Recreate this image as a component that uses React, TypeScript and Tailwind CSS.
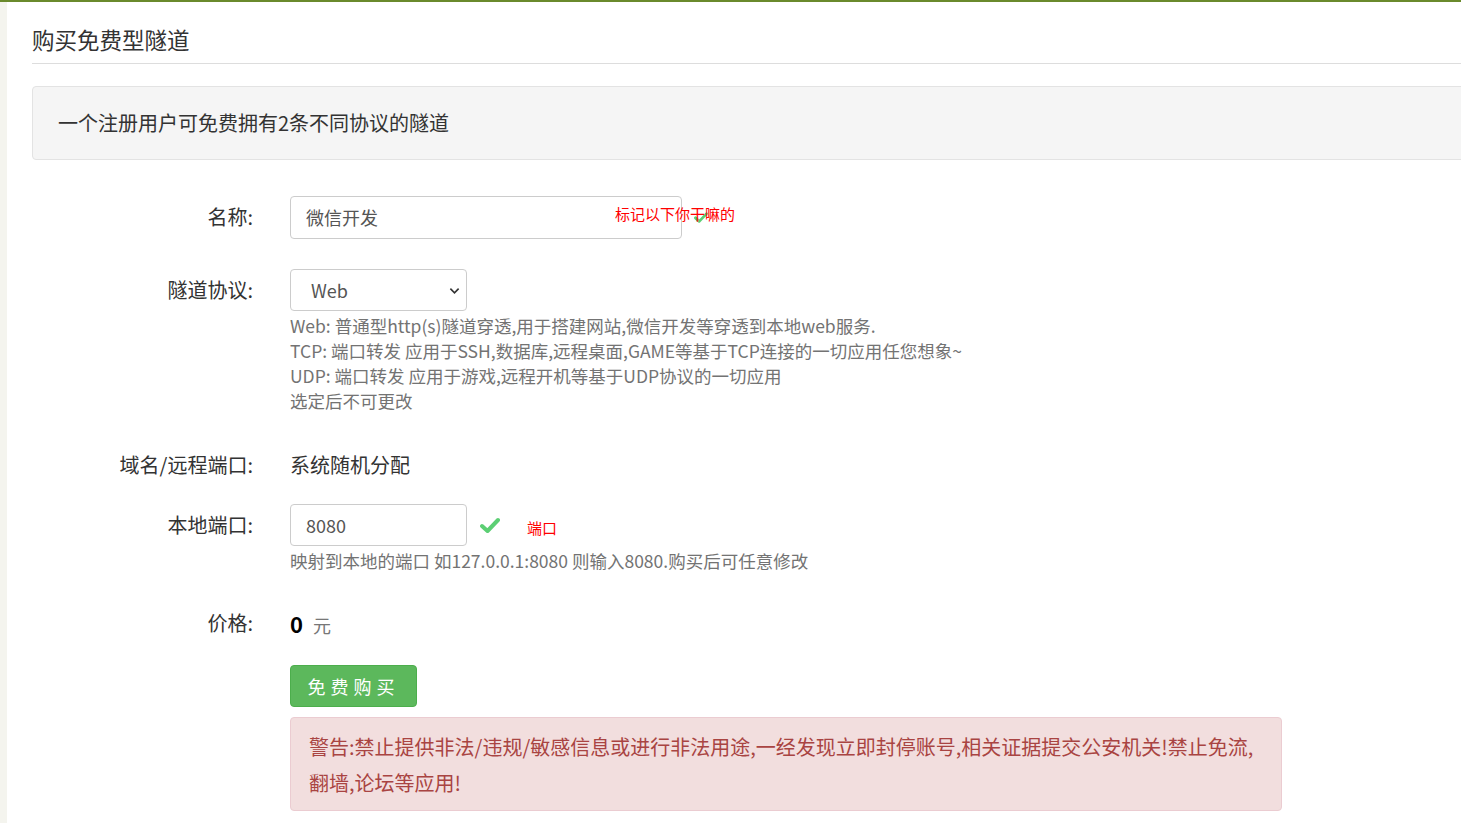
import React from "react";

const FONT = {
  fontFamily: '"Noto Sans CJK SC", "Noto Sans", sans-serif',
};

const Check = ({ className }: { className?: string }) => (
  <svg viewBox="0 0 20 16" className={className}>
    <path
      d="M2 8.5 L7.5 13.5 L18 2.5"
      fill="none"
      stroke="currentColor"
      strokeWidth="4"
      strokeLinecap="round"
      strokeLinejoin="round"
    />
  </svg>
);

const Label = ({ children }: { children: React.ReactNode }) => (
  <div className="w-[221px] shrink-0 text-right text-[20px] leading-[42px] text-[#333]">
    {children}
  </div>
);

export default function App() {
  return (
    <div
      className="min-h-screen overflow-hidden border-t-2 border-[#6a8a2c] bg-[#f4f4ee]"
      style={FONT}
    >
      <div className="ml-[7px] min-h-[821px] bg-white pl-[25px]">
        <div className="mr-[-20px] border-b border-[#dddddd] pt-[21px] pb-[8px] text-[22.5px] leading-[32px] text-[#333]">
          购买免费型隧道
        </div>

        <div className="mt-[22px] mr-[-20px] rounded-[4px] border border-[#e3e3e3] bg-[#f5f5f5] py-[22px] pl-[25px] text-[20px] leading-[28px] text-[#333]">
          一个注册用户可免费拥有2条不同协议的隧道
        </div>

        {/* 名称 */}
        <div className="mt-[36px] flex">
          <Label>名称:</Label>
          <div className="relative ml-[37px]">
            <div className="flex h-[43px] w-[392px] items-center rounded-[4px] border border-[#cccccc] px-[15px] text-[18px] text-[#555]">
              微信开发
            </div>
            <Check className="absolute top-[15px] left-[404px] h-[13px] w-[14px] text-[#5ccf74]" />
            <span className="absolute top-[8px] left-[325px] whitespace-nowrap text-[15px] leading-[20px] text-[#ff0000]">
              标记以下你干嘛的
            </span>
          </div>
        </div>

        {/* 隧道协议 */}
        <div className="mt-[30px] flex">
          <Label>隧道协议:</Label>
          <div className="ml-[37px]">
            <div className="relative flex h-[42px] w-[177px] items-center rounded-[4px] border border-[#cccccc] pl-[20px] text-[18px] text-[#555]">
              Web
              <svg
                viewBox="0 0 12 8"
                className="absolute top-[17px] right-[6px] h-[8px] w-[11px]"
              >
                <path
                  d="M1.5 1.5 L6 6 L10.5 1.5"
                  fill="none"
                  stroke="#333"
                  strokeWidth="1.8"
                />
              </svg>
            </div>
            <div className="mt-[2px] text-[17.5px] leading-[25px] text-[#737373]">
              <div>Web: 普通型http(s)隧道穿透,用于搭建网站,微信开发等穿透到本地web服务.</div>
              <div>TCP: 端口转发 应用于SSH,数据库,远程桌面,GAME等基于TCP连接的一切应用任您想象~</div>
              <div>UDP: 端口转发 应用于游戏,远程开机等基于UDP协议的一切应用</div>
              <div>选定后不可更改</div>
            </div>
          </div>
        </div>

        {/* 域名/远程端口 */}
        <div className="mt-[31px] flex">
          <Label>域名/远程端口:</Label>
          <div className="ml-[37px] text-[20px] leading-[42px] text-[#333]">
            系统随机分配
          </div>
        </div>

        {/* 本地端口 */}
        <div className="mt-[18px] flex">
          <Label>本地端口:</Label>
          <div className="ml-[37px]">
            <div className="flex items-center">
              <div className="flex h-[42px] w-[177px] items-center rounded-[4px] border border-[#cccccc] px-[15px] text-[18px] text-[#555]">
                8080
              </div>
              <Check className="ml-[13px] h-[17px] w-[20px] text-[#5ccf74]" />
              <span className="ml-[27px] mt-[6px] text-[15px] text-[#ff0000]">
                端口
              </span>
            </div>
            <div className="mt-[2px] text-[17.5px] leading-[25px] text-[#737373]">
              映射到本地的端口 如127.0.0.1:8080 则输入8080.购买后可任意修改
            </div>
          </div>
        </div>

        {/* 价格 */}
        <div className="mt-[29px] flex">
          <Label>价格:</Label>
          <div className="ml-[37px] flex items-baseline leading-[42px]">
            <span className="text-[22px] font-bold text-black">0</span>
            <span className="ml-[10px] text-[18px] text-[#777]">元</span>
          </div>
        </div>

        <div className="mt-[19px] flex">
          <div className="w-[221px] shrink-0" />
          <div className="ml-[37px]">
            <button className="block h-[42px] w-[127px] rounded-[4px] border border-[#4cae4c] bg-[#5cb85c] text-[18px] tracking-[5px] text-white">
              免费购买
            </button>
            <div className="mt-[10px] w-[992px] rounded-[4px] border border-[#ebccd1] bg-[#f2dede] pt-[11px] pb-[9px] pl-[18px] pr-[20px] text-[20px] leading-[36px] text-[#a94442]">
              警告:禁止提供非法/违规/敏感信息或进行非法用途,一经发现立即封停账号,相关证据提交公安机关!禁止免流,翻墙,论坛等应用!
            </div>
          </div>
        </div>
      </div>
    </div>
  );
}
